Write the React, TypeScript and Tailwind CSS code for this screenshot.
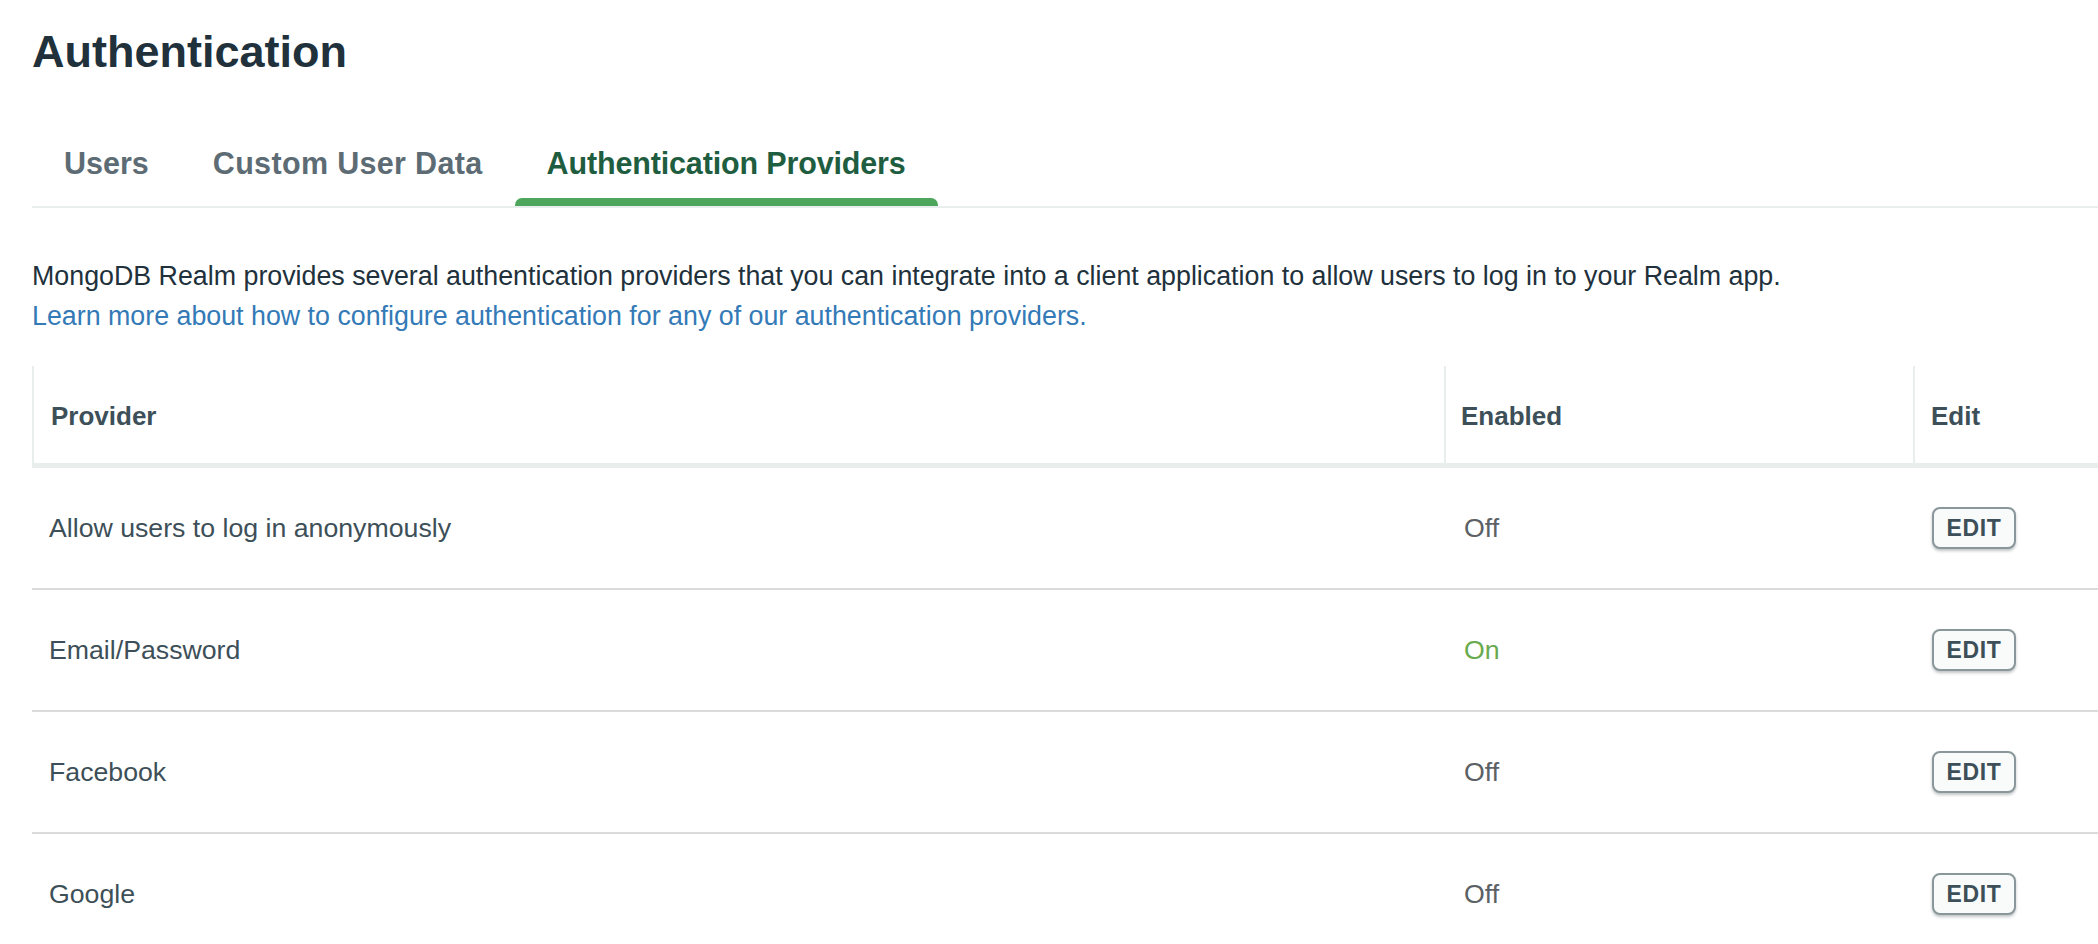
import React from "react";

const rows = [
  { name: "Allow users to log in anonymously", on: false },
  { name: "Email/Password", on: true },
  { name: "Facebook", on: false },
  { name: "Google", on: false },
];

export default function App() {
  return (
    <div className="w-[2098px] h-[944px] overflow-hidden bg-white font-['Liberation_Sans',Arial,sans-serif] text-[#21313c]">
      <div className="pl-8">
        <h1 className="pt-6 text-[45px] leading-[56px] font-bold text-[#21313c]">Authentication</h1>

        <div className="mt-[65px] flex border-b-2 border-[#e8eded]">
          <div className="flex flex-col px-8">
            <span className="text-[30.5px] leading-[36px] font-bold text-[#5d6c74]">Users</span>
            <div className="mt-[17px] h-2" />
          </div>
          <div className="flex flex-col px-8">
            <span className="text-[30.5px] leading-[36px] font-bold tracking-[0.011em] text-[#5d6c74]">Custom User Data</span>
            <div className="mt-[17px] h-2" />
          </div>
          <div className="flex flex-col px-8">
            <span className="text-[30.5px] leading-[36px] font-bold tracking-[-0.005em] text-[#1f5d40]">Authentication Providers</span>
            <div className="mt-[17px] h-2 -mx-8 rounded-t-[7px] bg-[#4ea65c]" />
          </div>
        </div>

        <div className="mt-[48px] text-[26.8px] leading-[40px]">
          <p className="text-[#21313c]">
            MongoDB Realm provides several authentication providers that you can integrate into a client application to allow users to log in to your Realm app.
          </p>
          <a className="text-[#337ab7]">Learn more about how to configure authentication for any of our authentication providers.</a>
        </div>

        <div className="mt-[30px] w-[2066px]">
          <div className="grid grid-cols-[1412px_469px_1fr] h-[102px] border-b-[5px] border-[#e7eeec] text-[26px] font-bold text-[#3d4f58]">
            <div className="flex items-center pt-[3px] border-l-2 border-[#e8eded] pl-[17px]">Provider</div>
            <div className="flex items-center pt-[3px] border-l-2 border-[#e8eded] pl-[15px]">Enabled</div>
            <div className="flex items-center pt-[3px] border-l-2 border-[#e8eded] pl-[16px]">Edit</div>
          </div>
          {rows.map((r) => (
            <div
              key={r.name}
              className="grid grid-cols-[1412px_469px_1fr] h-[122px] border-b-2 border-[#dadcdc] text-[26.7px]"
            >
              <div className="flex items-center pl-[17px] text-[#3d4f58]">{r.name}</div>
              <div className={`flex items-center pl-[20px] ${r.on ? "text-[#6aaa4e]" : "text-[#5b6165]"}`}>
                {r.on ? "On" : "Off"}
              </div>
              <div className="flex items-center pl-[19px]">
                <button className="w-[84px] h-[42px] rounded-[8px] border-2 border-[#89979b] bg-[#f9fbfa] shadow-[0_2px_3px_rgba(6,22,33,0.25)] text-[23px] font-bold tracking-[0.03em] text-[#3d4f58] flex items-center justify-center">
                  EDIT
                </button>
              </div>
            </div>
          ))}
        </div>
      </div>
    </div>
  );
}
